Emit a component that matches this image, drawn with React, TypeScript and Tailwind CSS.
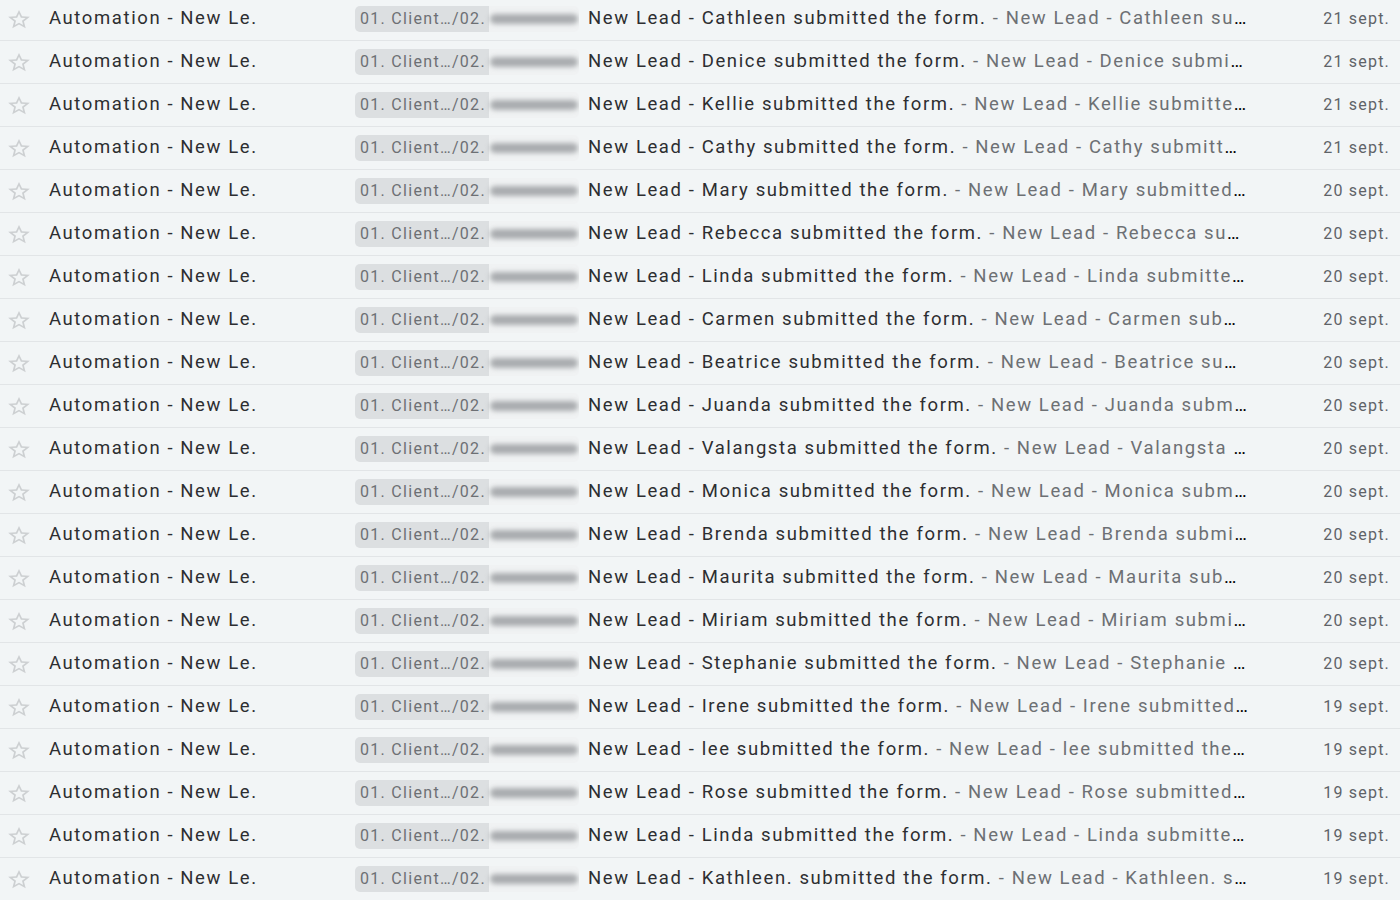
import { useMemo } from "react";

// Inbox rows: all read, all carrying the same (partly redacted) label.
const rows: { name: string; date: string }[] = [
  { name: "Cathleen", date: "21 sept." },
  { name: "Denice", date: "21 sept." },
  { name: "Kellie", date: "21 sept." },
  { name: "Cathy", date: "21 sept." },
  { name: "Mary", date: "20 sept." },
  { name: "Rebecca", date: "20 sept." },
  { name: "Linda", date: "20 sept." },
  { name: "Carmen", date: "20 sept." },
  { name: "Beatrice", date: "20 sept." },
  { name: "Juanda", date: "20 sept." },
  { name: "Valangsta", date: "20 sept." },
  { name: "Monica", date: "20 sept." },
  { name: "Brenda", date: "20 sept." },
  { name: "Maurita", date: "20 sept." },
  { name: "Miriam", date: "20 sept." },
  { name: "Stephanie", date: "20 sept." },
  { name: "Irene", date: "19 sept." },
  { name: "lee", date: "19 sept." },
  { name: "Rose", date: "19 sept." },
  { name: "Linda", date: "19 sept." },
  { name: "Kathleen.", date: "19 sept." },
];

function StarOutline() {
  return (
    <svg
      viewBox="0 0 24 24"
      preserveAspectRatio="none"
      className="h-[23px] w-[26px] text-[#cdd0d2]"
      fill="currentColor"
    >
      <path d="M22 9.24l-7.19-.62L12 2 9.19 8.63 2 9.24l5.46 4.73L5.82 21 12 17.27 18.18 21l-1.63-7.03L22 9.24zM12 15.4l-3.76 2.27 1-4.28-3.32-2.88 4.38-.38L12 6.1l1.71 4.04 4.38.38-3.32 2.88 1 4.28L12 15.4z" />
    </svg>
  );
}

function Label() {
  return (
    <div className="flex h-[26px] w-[224px] shrink-0 items-stretch overflow-hidden rounded-[5px]">
      <div className="flex items-center bg-[#dcdfe1] pl-[5px] pr-[3px] text-[16px] leading-none tracking-[1.3px] text-[#6d7074]">
        01. Client…/02.
      </div>
      {/* redacted part of the label */}
      <div className="flex flex-1 items-center bg-[#f0f2f3]">
        <div className="mx-[1px] h-[10px] flex-1 rounded-full bg-[#a9acaf] blur-[2.5px]" />
      </div>
    </div>
  );
}

function Row({ name, date }: { name: string; date: string }) {
  return (
    <div className="flex h-[43px] items-center border-b border-[#e2e5e7]">
      <div className="flex w-[49px] shrink-0 items-center pl-[6px]">
        <StarOutline />
      </div>
      <div className="w-[306px] shrink-0 truncate text-[18.5px] tracking-[1.6px] text-[#2d2e31]">
        Automation - New Le.
      </div>
      <Label />
      <div className="ml-[9px] min-w-0 flex-1 truncate text-[18.5px] tracking-[1.6px]">
        <span className="text-[#2d2e31]">New Lead - {name} submitted the form.</span>
        <span className="text-[#6d7074]">
          {" "}- New Lead - {name} submitted the form.
        </span>
      </div>
      <div className="w-[152px] shrink-0 pr-[10px] text-right text-[16px] tracking-[1.2px] text-[#5f6368]">
        {date}
      </div>
    </div>
  );
}

export default function App() {
  const list = useMemo(() => rows, []);
  return (
    <div
      className="h-[900px] w-[1400px] overflow-hidden bg-[#f2f5f6]"
      style={{ fontFamily: "Roboto, 'Liberation Sans', sans-serif" }}
    >
      <div className="-mt-[2px]">
        {list.map((r, i) => (
          <Row key={i} name={r.name} date={r.date} />
        ))}
      </div>
    </div>
  );
}
